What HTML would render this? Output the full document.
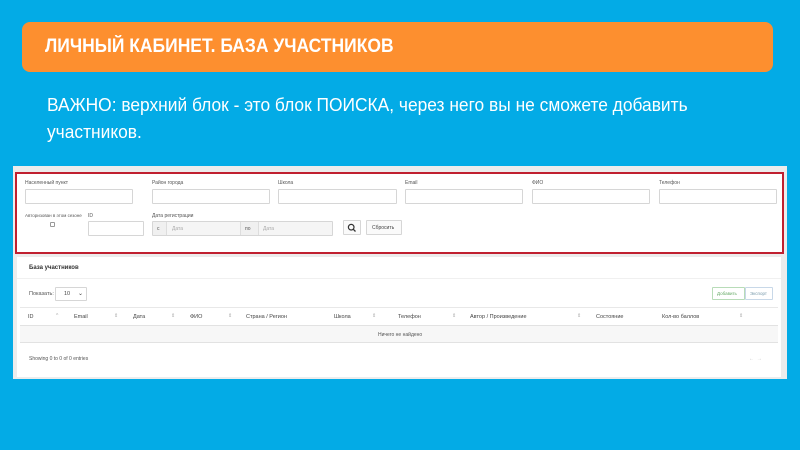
<!DOCTYPE html>
<html><head><meta charset="utf-8"><style>
*{margin:0;padding:0;box-sizing:border-box}
body{width:800px;height:450px;background:#03abe6;position:relative;overflow:hidden;font-family:"Liberation Sans",sans-serif}
.a{position:absolute}
.t{font-size:5px;color:#555;position:absolute;white-space:nowrap}
.in{position:absolute;border:1px solid #d6d6d6;background:#fff;height:15px;border-radius:1px}
.h{font-size:5.5px;color:#444;position:absolute;top:314px;white-space:nowrap}
.s{font-size:5px;color:#aaa;position:absolute;top:313px}
</style></head><body>
<div class="a" style="left:22px;top:22px;width:751px;height:50px;background:#fd8f2f;border-radius:8px"></div>
<div class="a" style="left:45px;top:36px;font-size:19px;font-weight:bold;color:#fff;transform:scaleX(0.92);transform-origin:0 0;white-space:nowrap">ЛИЧНЫЙ КАБИНЕТ. БАЗА УЧАСТНИКОВ</div>
<div class="a" style="left:47px;top:92px;font-size:18px;color:#fff;line-height:27px;transform:scaleX(0.965);transform-origin:0 0;white-space:nowrap">ВАЖНО: верхний блок - это блок ПОИСКА, через него вы не сможете добавить<br>участников.</div>

<div class="a" style="left:13px;top:166px;width:774px;height:213px;background:#ececec"></div>
<div class="a" style="left:15px;top:172px;width:769px;height:82px;border:2px solid #c02030;background:#fff"></div>
<div class="t" style="left:25px;top:180px">Населенный пункт</div>
<div class="t" style="left:152px;top:180px">Район города</div>
<div class="t" style="left:278px;top:180px">Школа</div>
<div class="t" style="left:405px;top:180px">Email</div>
<div class="t" style="left:532px;top:180px">ФИО</div>
<div class="t" style="left:659px;top:180px">Телефон</div>
<div class="in" style="left:25px;top:189px;width:108px"></div>
<div class="in" style="left:152px;top:189px;width:118px"></div>
<div class="in" style="left:278px;top:189px;width:119px"></div>
<div class="in" style="left:405px;top:189px;width:118px"></div>
<div class="in" style="left:532px;top:189px;width:118px"></div>
<div class="in" style="left:659px;top:189px;width:118px"></div>
<div class="t" style="left:25px;top:213px;font-size:4.5px">Авторизован в этом сезоне</div>
<div class="a" style="left:50px;top:222px;width:5px;height:5px;border:1px solid #999;border-radius:1px"></div>
<div class="t" style="left:88px;top:213px">ID</div>
<div class="in" style="left:88px;top:221px;width:56px"></div>
<div class="t" style="left:152px;top:213px">Дата регистрации</div>
<div class="in" style="left:152px;top:221px;width:181px;background:#f0f0f0"></div>
<div class="a" style="left:166px;top:222px;width:75px;height:13px;background:#f5f5f5;border-left:1px solid #ddd;border-right:1px solid #ddd"></div>
<div class="a" style="left:258px;top:222px;width:74px;height:13px;background:#f5f5f5;border-left:1px solid #ddd"></div>
<div class="t" style="left:157px;top:226px">с</div>
<div class="t" style="left:172px;top:226px;color:#aaa">Дата</div>
<div class="t" style="left:245px;top:226px">по</div>
<div class="t" style="left:263px;top:226px;color:#aaa">Дата</div>
<div class="in" style="left:343px;top:220px;width:18px;background:#fafafa"></div>
<svg class="a" style="left:347px;top:223px" width="10" height="10" viewBox="0 0 10 10"><circle cx="4.2" cy="4.2" r="2.8" fill="none" stroke="#333" stroke-width="1.2"/><line x1="6.2" y1="6.2" x2="8.5" y2="8.5" stroke="#333" stroke-width="1.3"/></svg>
<div class="in" style="left:366px;top:220px;width:36px;background:#fafafa"></div>
<div class="t" style="left:372px;top:225px;color:#444">Сбросить</div>

<div class="a" style="left:17px;top:257px;width:764px;height:120px;background:#fff"></div>
<div class="t" style="left:29px;top:265px;font-size:6px;font-weight:bold;color:#333">База участников</div>
<div class="a" style="left:17px;top:278px;width:764px;height:1px;background:#f0f0f0"></div>
<div class="t" style="left:29px;top:291px;font-size:5.5px;color:#555">Показать:</div>
<div class="in" style="left:55px;top:287px;width:32px;height:14px"></div>
<div class="t" style="left:64px;top:291px;font-size:5.5px;color:#444">10</div>
<div class="t" style="left:78px;top:290px;font-size:6px;color:#444">⌄</div>
<div class="in" style="left:712px;top:287px;width:33px;height:13px;border-color:#b8dcb8"></div>
<div class="t" style="left:717px;top:291px;font-size:4.5px;color:#6a6">Добавить</div>
<div class="in" style="left:745px;top:287px;width:28px;height:13px;border-color:#c8d8e8"></div>
<div class="t" style="left:750px;top:291px;font-size:4.5px;color:#79a">Экспорт</div>
<div class="a" style="left:20px;top:307px;width:758px;height:1px;background:#e8e8e8"></div>
<div class="a" style="left:20px;top:325px;width:758px;height:18px;background:#f7f7f7;border-top:1px solid #e2e2e2;border-bottom:1px solid #e2e2e2"></div>
<div class="h" style="left:28px">ID</div><div class="s" style="left:56px">^</div>
<div class="h" style="left:74px">Email</div><div class="s" style="left:114px">⇕</div>
<div class="h" style="left:133px">Дата</div><div class="s" style="left:171px">⇕</div>
<div class="h" style="left:190px">ФИО</div><div class="s" style="left:228px">⇕</div>
<div class="h" style="left:246px">Страна / Регион</div>
<div class="h" style="left:334px">Школа</div><div class="s" style="left:372px">⇕</div>
<div class="h" style="left:398px">Телефон</div><div class="s" style="left:452px">⇕</div>
<div class="h" style="left:470px">Автор / Произведение</div><div class="s" style="left:577px">⇕</div>
<div class="h" style="left:596px">Состояние</div>
<div class="h" style="left:662px">Кол-во баллов</div><div class="s" style="left:739px">⇕</div>
<div class="t" style="left:378px;top:332px;font-size:5px;color:#555">Ничего не найдено</div>
<div class="t" style="left:29px;top:356px;font-size:5px;color:#555">Showing 0 to 0 of 0 entries</div>
<div class="t" style="left:749px;top:356px;color:#bbb">←&nbsp;&nbsp;→</div>
</body></html>
